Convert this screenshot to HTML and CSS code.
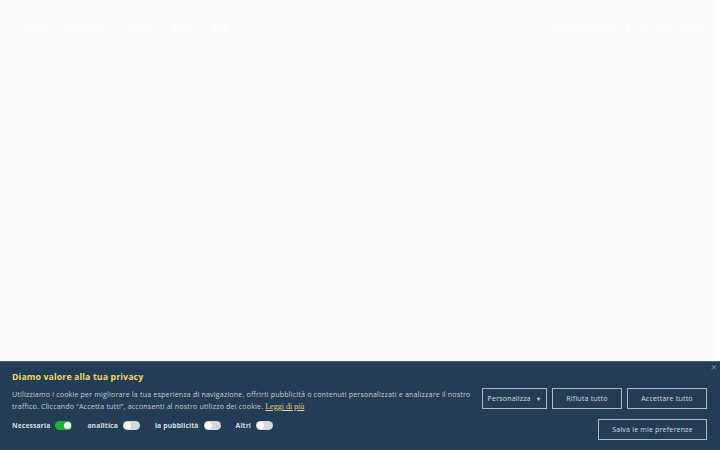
FILE: index.html
```html
<!DOCTYPE html>
<html lang="it">
<head>
    <meta charset="UTF-8">
    <meta name="viewport" content="width=device-width, initial-scale=1.0">
    <title>Privacy</title>
    <link rel="stylesheet" href="styles.css">
</head>
<body>
    <div class="page">
        <header class="top-nav">
            <nav class="nav-left">
                <a href="#">Home</a>
                <a href="#">Chi siamo</a>
                <a href="#">Servizi</a>
                <a href="#">Blog</a>
                <a href="#">FAQ</a>
            </nav>
            <nav class="nav-right">
                <a href="#">info@azienda.it</a>
                <span>&#9679;</span>
                <a href="#">IT</a>
                <a href="#">EN</a>
                <a href="#">Login</a>
            </nav>
        </header>
    </div>

    <!-- Banner cookie -->
    <div class="cookie-banner">
        <button class="close-btn">&times;</button>
        <div class="cookie-info">
            <h2>Diamo valore alla tua privacy</h2>
            <p>Utilizziamo i cookie per migliorare la tua esperienza di navigazione, offrirti pubblicità o contenuti personalizzati e analizzare il nostro traffico. Cliccando “Accetta tutti”, acconsenti al nostro utilizzo dei cookie. <a href="#" class="read-more">Leggi di più</a></p>
            <div class="toggles">
                <label class="toggle-item">Necessaria <span class="switch on"></span></label>
                <label class="toggle-item">analitica <span class="switch"></span></label>
                <label class="toggle-item">la pubblicità <span class="switch"></span></label>
                <label class="toggle-item">Altri <span class="switch"></span></label>
            </div>
        </div>
        <div class="cookie-actions">
            <div class="btn-row">
                <button class="btn btn-custom">Personalizza <span class="caret">&#9660;</span></button>
                <button class="btn btn-reject">Rifiuta tutto</button>
                <button class="btn btn-accept">Accettare tutto</button>
            </div>
            <div class="btn-row">
                <button class="btn btn-save">Salva le mie preferenze</button>
            </div>
        </div>
    </div>
</body>
</html>
```

FILE: styles.css
```css
html, body {
    margin: 0;
    height: 100%;
}
body {
    font-family: 'Open Sans', 'Liberation Sans', sans-serif;
    background: #ffffff;
    overflow: hidden;
}
.page {
    background: #fcf9fa;
    height: 100%;
    margin-right: 7px;
}
.top-nav {
    display: flex;
    justify-content: space-between;
    align-items: center;
    padding: 21px 10px 0 24px;
    font-size: 8px;
}
.top-nav a, .top-nav span {
    color: #ffffff;
    text-decoration: none;
}
.nav-left, .nav-right {
    display: flex;
    gap: 22px;
}
.nav-right {
    gap: 12px;
}

/* Banner s cookies */
.cookie-banner {
    position: fixed;
    left: 0;
    right: 0;
    bottom: 0;
    height: 89px;
    background: #223d55;
    border-top: 1px solid #4b6175;
    display: flex;
    justify-content: space-between;
    padding: 0 13px 0 12px;
    box-sizing: border-box;
    font-family: 'Open Sans', sans-serif;
}
.close-btn {
    position: absolute;
    top: -1px;
    right: 3px;
    background: none;
    border: none;
    color: #6f8396;
    font-size: 11px;
    padding: 0;
    cursor: pointer;
}
.cookie-info {
    width: 462px;
}
.cookie-info h2 {
    color: #f2d662;
    font-size: 8.8px;
    font-weight: 700;
    margin: 9px 0 5px;
    letter-spacing: 0.1px;
}
.cookie-info p {
    color: #c4ced8;
    font-size: 7.1px;
    line-height: 12px;
    margin: 0;
    letter-spacing: 0.17px;
}
.read-more {
    display: inline-block;
    line-height: 9px;
    color: #e9d57a;
    font-family: 'Liberation Serif', serif;
    font-size: 8px;
    letter-spacing: 0;
}
.toggles {
    display: flex;
    gap: 15px;
    margin-top: 9px;
}
.toggle-item {
    display: flex;
    align-items: center;
    gap: 5px;
    color: #d8dfe6;
    font-size: 6.8px;
    font-weight: 700;
    letter-spacing: 0.12px;
}
.switch {
    position: relative;
    width: 17px;
    height: 9px;
    border-radius: 5px;
    background: #d6d9dc;
}
.switch::after {
    content: '';
    position: absolute;
    top: 1px;
    left: 1px;
    width: 7px;
    height: 7px;
    border-radius: 50%;
    background: #ffffff;
}
.switch.on {
    background: #1fb23a;
}
.switch.on::after {
    left: 9px;
}
.cookie-actions {
    display: flex;
    flex-direction: column;
    align-items: flex-end;
    gap: 10px;
    padding-top: 26px;
}
.btn-row {
    display: flex;
    gap: 5px;
}
.btn {
    height: 21px;
    background: transparent;
    border: 1.5px solid #a9b9c8;
    color: #d8dfe6;
    font-family: 'Open Sans', sans-serif;
    font-size: 7px;
    letter-spacing: 0.2px;
    padding: 0;
    white-space: nowrap;
    cursor: pointer;
}
.caret {
    font-size: 5.5px;
    margin-left: 3px;
}
.btn-custom {
    width: 65px;
}
.btn-reject {
    width: 70px;
}
.btn-accept {
    width: 80px;
}
.btn-save {
    width: 109px;
}
```
